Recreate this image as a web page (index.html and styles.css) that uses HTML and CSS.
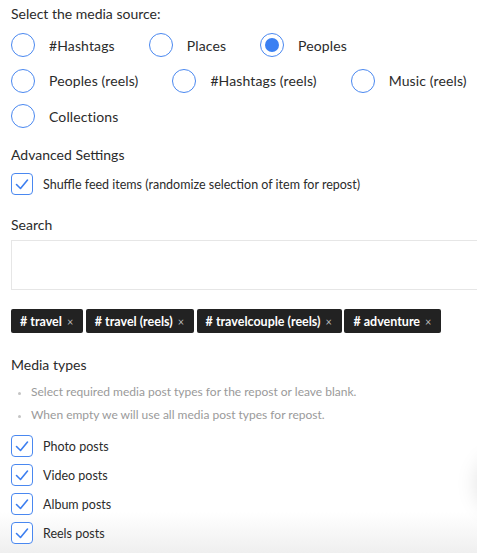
FILE: index.html
```html
<!DOCTYPE html>
<html>
<head>
<meta charset="utf-8">
<link rel="stylesheet" href="styles.css">
</head>
<body>
<div class="page">
  <div class="heading">Select the media source:</div>
  <div class="radios">
    <div class="radio-row">
      <label class="radio"><span class="circle"></span><span>#Hashtags</span></label>
      <label class="radio"><span class="circle"></span><span>Places</span></label>
      <label class="radio"><span class="circle on"></span><span>Peoples</span></label>
    </div>
    <div class="radio-row">
      <label class="radio"><span class="circle"></span><span>Peoples (reels)</span></label>
      <label class="radio"><span class="circle"></span><span>#Hashtags (reels)</span></label>
      <label class="radio"><span class="circle"></span><span>Music (reels)</span></label>
    </div>
    <div class="radio-row">
      <label class="radio"><span class="circle"></span><span>Collections</span></label>
    </div>
  </div>

  <div class="heading adv">Advanced Settings</div>
  <label class="check"><span class="box"><svg viewBox="0 0 22 22" width="22" height="22"><path d="M5.5 11.5 L9.5 15.5 L16.5 7" fill="none" stroke="#3d7ff0" stroke-width="1.6" stroke-linecap="round" stroke-linejoin="round"/></svg></span><span>Shuffle feed items (randomize selection of item for repost)</span></label>

  <div class="heading search-label">Search</div>
  <div class="search"></div>

  <div class="tags">
    <span class="tag"># travel <span class="x">×</span></span>
    <span class="tag"># travel (reels) <span class="x">×</span></span>
    <span class="tag"># travelcouple (reels) <span class="x">×</span></span>
    <span class="tag"># adventure <span class="x">×</span></span>
  </div>

  <div class="heading media">Media types</div>
  <ul class="notes">
    <li>Select required media post types for the repost or leave blank.</li>
    <li>When empty we will use all media post types for repost.</li>
  </ul>

  <div class="checks">
    <label class="check"><span class="box"><svg viewBox="0 0 22 22" width="22" height="22"><path d="M5.5 11.5 L9.5 15.5 L16.5 7" fill="none" stroke="#3d7ff0" stroke-width="1.6" stroke-linecap="round" stroke-linejoin="round"/></svg></span><span>Photo posts</span></label>
    <label class="check"><span class="box"><svg viewBox="0 0 22 22" width="22" height="22"><path d="M5.5 11.5 L9.5 15.5 L16.5 7" fill="none" stroke="#3d7ff0" stroke-width="1.6" stroke-linecap="round" stroke-linejoin="round"/></svg></span><span>Video posts</span></label>
    <label class="check"><span class="box"><svg viewBox="0 0 22 22" width="22" height="22"><path d="M5.5 11.5 L9.5 15.5 L16.5 7" fill="none" stroke="#3d7ff0" stroke-width="1.6" stroke-linecap="round" stroke-linejoin="round"/></svg></span><span>Album posts</span></label>
    <label class="check"><span class="box"><svg viewBox="0 0 22 22" width="22" height="22"><path d="M5.5 11.5 L9.5 15.5 L16.5 7" fill="none" stroke="#3d7ff0" stroke-width="1.6" stroke-linecap="round" stroke-linejoin="round"/></svg></span><span>Reels posts</span></label>
  </div>
</div>
<div class="fab-shadow"></div>
</body>
</html>
```

FILE: styles.css
```css
html, body {
  margin: 0;
  padding: 0;
  overflow: hidden;
}
body {
  font-family: "Lato", "Open Sans", sans-serif;
  color: #2b2b2b;
  width: 477px;
  height: 553px;
  background: linear-gradient(to bottom, #fff 0, #fff 512px, #efefef 553px);
}
.page {
  padding: 4px 0 0 11px;
}
.heading {
  font-size: 14px;
  line-height: 20px;
}
.radios {
  display: flex;
  flex-direction: column;
  row-gap: 11.5px;
  margin-top: 9px;
}
.radio-row {
  display: flex;
  white-space: nowrap;
}
.radio {
  display: flex;
  align-items: center;
  height: 24px;
  margin-right: 34px;
  font-size: 14px;
  letter-spacing: 0.12px;
  white-space: nowrap;
}
.circle {
  width: 24px;
  height: 24px;
  box-sizing: border-box;
  border: 1.5px solid #4a88f0;
  border-radius: 50%;
  margin-right: 14px;
  display: flex;
  align-items: center;
  justify-content: center;
  flex: none;
}
.circle.on::after {
  content: "";
  width: 14px;
  height: 14px;
  border-radius: 50%;
  background: #3b80f2;
}
.adv {
  margin-top: 17px;
}
.check {
  display: flex;
  align-items: center;
  height: 22px;
  font-size: 12.5px;
  white-space: nowrap;
}
.adv + .check {
  margin-top: 8px;
}
.box {
  width: 22px;
  height: 22px;
  box-sizing: border-box;
  border: 1.3px solid #4a88f0;
  border-radius: 4px;
  margin-right: 10px;
  flex: none;
  display: flex;
  align-items: center;
  justify-content: center;
  background: #fff;
}
.box svg {
  display: block;
  margin: -1.3px;
}
.search-label {
  margin-top: 20px;
}
.search {
  margin-top: 5px;
  height: 50px;
  box-sizing: border-box;
  border: 1px solid #e6e6e6;
  border-right: none;
}
.tags {
  display: flex;
  gap: 2.5px;
  margin-top: 19px;
}
.tag {
  display: inline-flex;
  align-items: center;
  height: 24px;
  padding: 0 10px 0 9px;
  background: #222;
  color: #fff;
  font-weight: 700;
  font-size: 12.5px;
  border-radius: 2px;
  white-space: nowrap;
}
.tag .x {
  color: #bbb;
  font-weight: 400;
  font-size: 11px;
  margin-left: 5px;
}
.media {
  margin-top: 22px;
}
.notes {
  margin: 5px 0 0 0;
  padding: 0 0 0 20px;
  color: #9a9a9a;
  font-size: 12px;
  line-height: 23px;
}
.notes li::marker {
  color: #c4c4c4;
  font-size: 10px;
}
.checks {
  display: flex;
  flex-direction: column;
  gap: 7px;
  margin-top: 9px;
}
.fab-shadow {
  position: fixed;
  right: -58px;
  top: 455px;
  width: 58px;
  height: 58px;
  border-radius: 50%;
  background: #fff;
  box-shadow: 0 0 22px rgba(0,0,0,0.13);
}
```
